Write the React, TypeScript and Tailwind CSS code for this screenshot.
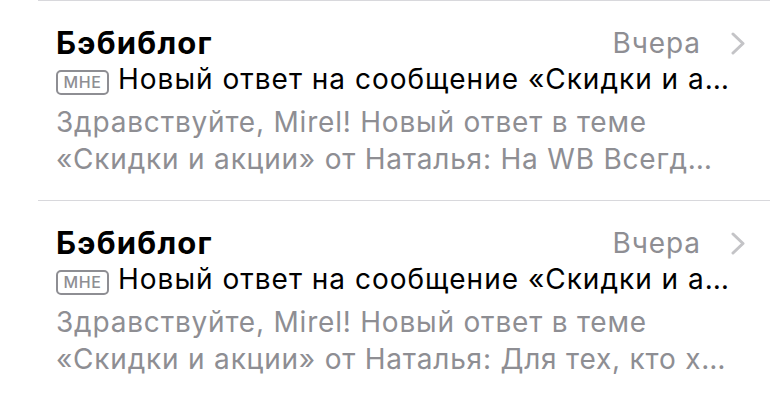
import React from 'react';

type Message = {
  id: number;
  sender: string;
  date: string;
  subject: string;
  preview: [string, string];
};

const messages: Message[] = [
  {
    id: 1,
    sender: 'Бэбиблог',
    date: 'Вчера',
    subject: 'Новый ответ на сообщение «Скидки и а…',
    preview: ['Здравствуйте, Mirel! Новый ответ в теме', '«Скидки и акции» от Наталья: На WB Всегд…'],
  },
  {
    id: 2,
    sender: 'Бэбиблог',
    date: 'Вчера',
    subject: 'Новый ответ на сообщение «Скидки и а…',
    preview: ['Здравствуйте, Mirel! Новый ответ в теме', '«Скидки и акции» от Наталья: Для тех, кто х…'],
  },
];

const Chevron: React.FC = () => (
  <svg width="14" height="23" viewBox="0 0 14 23" fill="none">
    <polyline
      points="2,2 12,11.5 2,21"
      stroke="#c4c4c7"
      strokeWidth="3"
      strokeLinecap="round"
      strokeLinejoin="round"
    />
  </svg>
);

const MessageRow: React.FC<{ message: Message }> = ({ message }) => (
  <div className="ml-[38px] border-t border-[#d8d8dc] pl-[18px] pr-[25px] pt-[24px] pb-[22px]">
    <div className="flex items-center justify-between h-[36px]">
      <span className="text-[31px] leading-[36px] font-bold tracking-[1.2px] text-black">{message.sender}</span>
      <div className="flex items-center gap-[30px]">
        <span className="text-[28px] leading-[36px] tracking-[0.9px] text-[#8e8e93]">{message.date}</span>
        <Chevron />
      </div>
    </div>
    <div className="flex items-center h-[36px] whitespace-nowrap overflow-hidden">
      <span className="mt-[6px] flex items-center justify-center w-[53px] h-[25px] shrink-0 rounded-[5px] border-2 border-[#8e8e93] text-[16px] leading-none font-medium tracking-[0.6px] text-[#8e8e93]">
        МНЕ
      </span>
      <span className="ml-[9px] text-[28px] leading-[36px] tracking-[1px] text-black">{message.subject}</span>
    </div>
    <div className="mt-[7px] text-[28px] leading-[37px] tracking-[0.8px] text-[#8e8e93] whitespace-nowrap overflow-hidden">
      <div>{message.preview[0]}</div>
      <div>{message.preview[1]}</div>
    </div>
  </div>
);

export default function App() {
  return (
    <div className="w-[770px] h-[400px] overflow-hidden bg-white font-['Inter',sans-serif]">
      {messages.map((m) => (
        <MessageRow key={m.id} message={m} />
      ))}
    </div>
  );
}
